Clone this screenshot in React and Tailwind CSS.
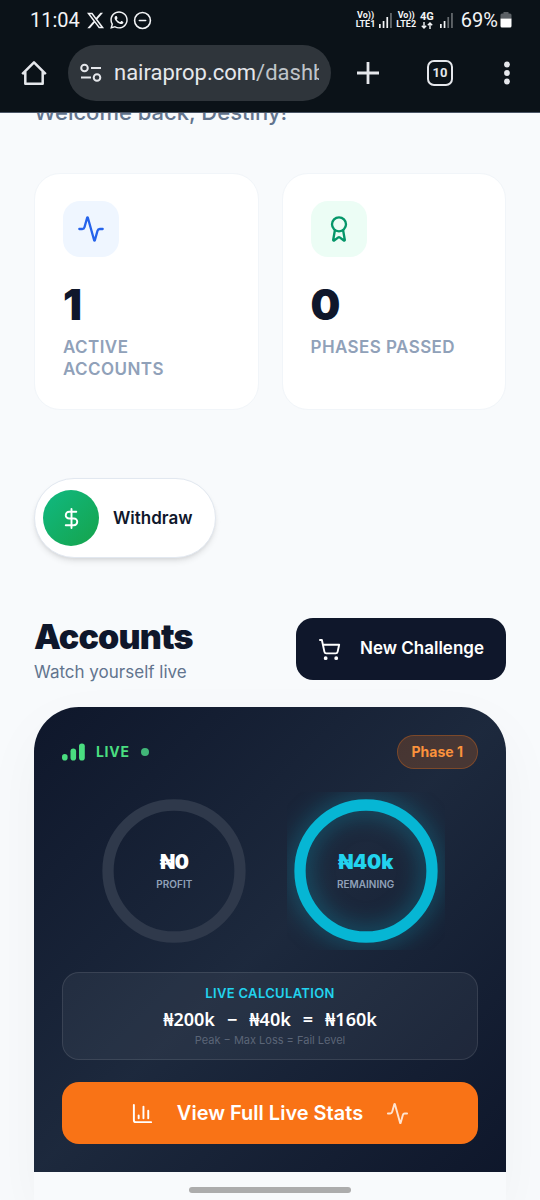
import { Activity, Award, ChartColumn, CircleMinus, DollarSign, ShoppingCart } from 'lucide-react';
import { FaWhatsapp, FaXTwitter } from 'react-icons/fa6';

const stats = [
  { label: 'Active Accounts', value: '1', icon: Activity, tone: 'bg-[#eff6ff] text-[#2563eb]' },
  { label: 'Phases Passed', value: '0', icon: Award, tone: 'bg-[#ecfdf5] text-[#059669]' },
];

function SignalBars({ strength }) {
  return (
    <svg width="13" height="15" viewBox="0 0 13 15" fill="currentColor" aria-hidden="true">
      {[4, 7, 11, 15].map((h, i) => (
        <rect key={h} x={i * 3.7} y={15 - h} width="1.7" height={h} opacity={i < strength ? 1 : 0.4} />
      ))}
    </svg>
  );
}

function VoLte({ line }) {
  return (
    <span className="text-center text-[9px] font-bold leading-[9px]">
      Vo))
      <br />
      LTE{line}
    </span>
  );
}

function StatusBar() {
  return (
    <div className="flex h-10 items-center justify-between pl-[30px] pr-7 font-[Roboto,sans-serif] text-[20px] leading-6 text-gray-100">
      <div className="flex items-center gap-1.5">
        <span>11:04</span>
        <span className="flex items-center gap-1">
          <FaXTwitter size={19} />
          <FaWhatsapp size={20} />
          <CircleMinus size={19} strokeWidth={2} />
        </span>
      </div>
      <div className="flex items-center gap-1">
        <VoLte line={1} />
        <SignalBars strength={3} />
        <VoLte line={2} />
        <span className="flex flex-col items-center text-[11px] font-bold leading-[10px]">
          4G
          <svg width="12" height="7" viewBox="0 0 12 7" fill="none" stroke="currentColor" strokeWidth="1.4" aria-hidden="true">
            <path d="M3 0v6M.8 3.8 3 6l2.2-2.2M9 7V1M6.8 3.2 9 1l2.2 2.2" />
          </svg>
        </span>
        <span className="ml-0.5">
          <SignalBars strength={2} />
        </span>
        <span className="ml-1 flex items-center gap-0.5">
          69%
          <svg width="12" height="16" viewBox="0 0 12 16" aria-hidden="true">
            <path d="M3.5 0h5v1.5H10A1.5 1.5 0 0 1 11.5 3v3.5H.5V3A1.5 1.5 0 0 1 2 1.5h1.5z" fill="#5b6065" />
            <path d="M.5 6.500h11v7.500A1.5 1.5 0 0 1 10 15.500H2A1.5 1.5 0 0 1 .5 14z" fill="#fff" />
          </svg>
        </span>
      </div>
    </div>
  );
}

function BrowserBar() {
  return (
    <div className="flex items-center pb-[11px] pl-5 pr-1 pt-[5px] text-gray-200">
      <button aria-label="Home" className="flex w-7 shrink-0 justify-center">
        <svg width="28" height="28" viewBox="0 0 28 28" fill="none" stroke="currentColor" strokeWidth="2.5">
          <path d="M2.2 15.2 14 3.3l11.8 11.9M5.3 12.500v12.300h17.400V12.500" strokeLinejoin="round" />
        </svg>
      </button>
      <button className="ml-5 flex h-14 min-w-0 flex-1 items-center gap-3 rounded-full bg-[#2f353b] pl-3 pr-3">
        <svg width="22" height="20" viewBox="0 0 22 20" fill="none" stroke="currentColor" strokeWidth="2" className="shrink-0" aria-hidden="true">
          <circle cx="4.5" cy="5" r="3.3" />
          <path d="M11 5h10M1 14.500h10" />
          <circle cx="17" cy="14.5" r="3.3" />
        </svg>
        <span className="min-w-0 flex-1 overflow-hidden whitespace-nowrap text-left font-[Roboto,sans-serif] text-[22px] leading-8">
          nairaprop.com<span className="text-[#bfc4c9]">/dashboard</span>
        </span>
      </button>
      <button aria-label="New tab" className="ml-[3px] flex w-[68px] shrink-0 justify-center">
        <svg width="24" height="24" viewBox="0 0 24 24" stroke="currentColor" strokeWidth="2.8">
          <path d="M12 1v22M1 12h22" />
        </svg>
      </button>
      <button aria-label="Switch tabs" className="flex w-[76px] shrink-0 justify-center">
        <span className="flex size-[26px] items-center justify-center rounded-[7px] border-[2px] border-gray-200 font-[Roboto,sans-serif] text-[13px] font-bold leading-4">
          10
        </span>
      </button>
      <button aria-label="Menu" className="flex w-[58px] shrink-0 justify-center">
        <svg width="6" height="24" viewBox="0 0 6 24" fill="currentColor">
          <circle cx="3" cy="3.5" r="2.9" />
          <circle cx="3" cy="12" r="2.9" />
          <circle cx="3" cy="20.5" r="2.9" />
        </svg>
      </button>
    </div>
  );
}

function StatCard({ label, value, icon: Icon, tone }) {
  return (
    <div className="rounded-[26px] border border-slate-100 bg-white px-7 pb-[29px] pt-[27px]">
      <div className={`flex size-14 items-center justify-center rounded-[17px] ${tone}`}>
        <Icon size={28} />
      </div>
      <div className="mt-[27px] text-[42px] font-black leading-[42px] text-slate-900">{value}</div>
      <div className="mt-[10px] text-[17px] font-semibold uppercase leading-[22px] tracking-wide text-slate-400">
        {label}
      </div>
    </div>
  );
}

function Ring({ value, label, stroke, valueClass, glow }) {
  return (
    <div className="grid size-[158px] place-items-center">
      <svg viewBox="0 0 158 158" className="col-start-1 row-start-1 size-full overflow-hidden" aria-hidden="true">
        <circle
          cx="79"
          cy="79"
          r="66"
          fill="none"
          stroke={stroke}
          strokeWidth="11.3"
          className={glow ? 'drop-shadow-[0_0_12px_rgba(6,182,212,0.5)]' : undefined}
        />
      </svg>
      <div className="col-start-1 row-start-1 text-center">
        <div className={`text-[20px] font-black leading-6 ${valueClass}`}>{value}</div>
        <div className="mt-0.5 text-[10px] font-semibold uppercase leading-4 text-slate-400">{label}</div>
      </div>
    </div>
  );
}

function AccountCard() {
  return (
    <article className="mt-[23px] flex-1 rounded-t-[45px] shadow-[0_20px_60px_rgba(15,23,42,0.04)]">
      <div className="rounded-t-[45px] bg-linear-to-br from-slate-900 via-slate-800 to-slate-900 p-7">
        <div className="flex items-center justify-between">
          <div className="flex items-center gap-[11px] text-[#4ade80]">
            <svg width="23" height="18" viewBox="0 0 23 18" fill="currentColor" aria-hidden="true">
              <rect x="0" y="11" width="5.6" height="6.5" rx="2.8" />
              <rect x="8.5" y="5.5" width="5.6" height="12" rx="2.8" />
              <rect x="17" y="0.5" width="5.8" height="17" rx="2.8" />
            </svg>
            <span className="text-[14px] font-bold leading-5 tracking-wider">LIVE</span>
            <span className="size-2 rounded-full bg-[#41b678]" />
          </div>
          <span className="rounded-full border border-[#f97316]/30 bg-[#f97316]/20 px-[14px] py-[6px] text-[14px] font-bold leading-5 text-[#fb923c]">
            Phase 1
          </span>
        </div>

        <div className="mt-[23px] flex justify-evenly">
          <Ring value="₦0" label="Profit" stroke="#2f394b" valueClass="text-white" />
          <Ring value="₦40k" label="Remaining" stroke="#06b6d4" valueClass="text-[#22d3ee]" glow />
        </div>

        <div className="mt-[22px] rounded-[17px] border border-white/10 bg-white/5 py-[10px] text-center">
          <div className="text-[13px] font-semibold uppercase leading-5 tracking-wide text-[#22d3ee]">Live Calculation</div>
          <div className="mt-1 flex justify-center gap-[12px] font-['Noto_Sans',sans-serif] text-[18px] font-semibold leading-6 text-white">
            <span>₦200k</span>
            <span>−</span>
            <span>₦40k</span>
            <span>=</span>
            <span>₦160k</span>
          </div>
          <div className="text-[11px] leading-[18px] text-[#5b6577]">Peak − Max Loss = Fail Level</div>
        </div>

        <button className="mt-[22px] flex h-[62px] w-full items-center justify-center gap-[23px] rounded-[17px] bg-[#f97316] text-[20px] font-semibold text-white">
          <ChartColumn size={23} />
          View Full Live Stats
          <Activity size={23} className="opacity-80" />
        </button>
      </div>
    </article>
  );
}

export default function App() {
  return (
    <div className="relative flex min-h-screen flex-col overflow-hidden bg-slate-50 font-[Inter,sans-serif] text-slate-900">
      <header className="relative z-10 border-b border-gray-600 bg-[#0b1218]">
        <StatusBar />
        <BrowserBar />
      </header>

      <main className="flex flex-1 flex-col px-[34px]">
        <p className="-mt-[17px] text-[22px] font-medium leading-8 text-slate-500">Welcome back, Destiny!</p>

        <section className="mt-[45px] grid grid-cols-2 gap-[23px]">
          {stats.map((s) => (
            <StatCard key={s.label} {...s} />
          ))}
        </section>

        <button className="mt-[68px] flex items-center gap-[14px] self-start rounded-full border border-slate-200 bg-white py-[11px] pl-2 pr-[23px] shadow-md">
          <span className="flex size-14 items-center justify-center rounded-full bg-linear-to-br from-[#10b981] to-[#16a34a] text-white">
            <DollarSign size={23} />
          </span>
          <span className="text-[17px] font-semibold leading-6">Withdraw</span>
        </button>

        <section className="mt-[60px] flex items-start justify-between">
          <div>
            <h2 className="text-[34px] font-black leading-[38px] tracking-tight">Accounts</h2>
            <p className="mt-1 text-[17px] leading-6 text-slate-500">Watch yourself live</p>
          </div>
          <button className="flex h-[62px] items-center gap-[19px] rounded-[17px] bg-slate-900 px-[22px] text-[17px] font-semibold text-white">
            <ShoppingCart size={23} />
            New Challenge
          </button>
        </section>

        <AccountCard />
      </main>

      <div className="absolute inset-x-0 bottom-[7px] mx-auto h-[6px] w-[30%] rounded-full bg-[#acacac]" />
    </div>
  );
}
